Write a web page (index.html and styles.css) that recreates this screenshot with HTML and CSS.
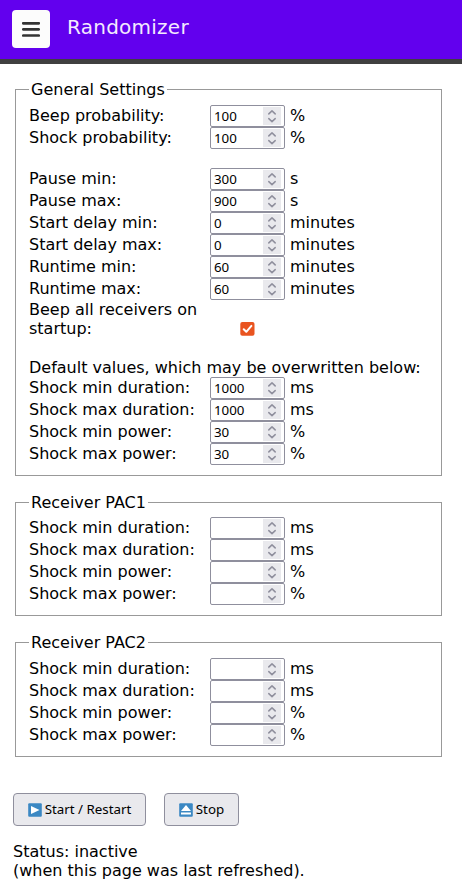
FILE: index.html
```html
<!DOCTYPE html>
<html lang="en">
<head>
<meta charset="utf-8">
<title>Randomizer</title>
<link rel="stylesheet" href="styles.css">
</head>
<body>
<header class="topbar">
  <button class="menu" aria-label="Menu"><svg width="18" height="15" viewBox="0 0 18 15"><path d="M1.3 1.3H16.7M1.3 7.4H16.7M1.3 13.5H16.7" stroke="#333" stroke-width="2.7" stroke-linecap="round"/></svg></button>
  <h1>Randomizer</h1>
</header>
<main>
  <form id="form">
    <fieldset class="general">
      <legend>General Settings</legend>
      <div class="row" data-value="100" data-unit="%">Beep probability:</div>
      <div class="row" data-value="100" data-unit="%">Shock probability:</div>
      <div class="blank"></div>
      <div class="row" data-value="300" data-unit="s">Pause min:</div>
      <div class="row" data-value="900" data-unit="s">Pause max:</div>
      <div class="row" data-value="0" data-unit="minutes">Start delay min:</div>
      <div class="row" data-value="0" data-unit="minutes">Start delay max:</div>
      <div class="row" data-value="60" data-unit="minutes">Runtime min:</div>
      <div class="row" data-value="60" data-unit="minutes">Runtime max:</div>
      <div class="check-row">
        <span>Beep all receivers on startup:</span>
        <svg class="check" width="15" height="15" viewBox="0 0 15 15"><rect x=".3" y=".9" width="14.2" height="13.9" rx="2" fill="#e95420"/><path d="M3.7 8.2L6.3 10.8L11.4 4.9" fill="none" stroke="#fff" stroke-width="2" stroke-linecap="round" stroke-linejoin="round"/></svg>
      </div>
      <div class="blank"></div>
      <div class="note">Default values, which may be overwritten below:</div>
      <div class="row" data-value="1000" data-unit="ms">Shock min duration:</div>
      <div class="row" data-value="1000" data-unit="ms">Shock max duration:</div>
      <div class="row" data-value="30" data-unit="%">Shock min power:</div>
      <div class="row" data-value="30" data-unit="%">Shock max power:</div>
    </fieldset>
    <fieldset class="pac1">
      <legend>Receiver PAC1</legend>
      <div class="row" data-value="" data-unit="ms">Shock min duration:</div>
      <div class="row" data-value="" data-unit="ms">Shock max duration:</div>
      <div class="row" data-value="" data-unit="%">Shock min power:</div>
      <div class="row" data-value="" data-unit="%">Shock max power:</div>
    </fieldset>
    <fieldset class="pac2">
      <legend>Receiver PAC2</legend>
      <div class="row" data-value="" data-unit="ms">Shock min duration:</div>
      <div class="row" data-value="" data-unit="ms">Shock max duration:</div>
      <div class="row" data-value="" data-unit="%">Shock min power:</div>
      <div class="row" data-value="" data-unit="%">Shock max power:</div>
    </fieldset>
    <div class="actions">
      <button type="button" class="btn start"><svg width="14" height="14" viewBox="0 0 14 14"><rect x=".2" y=".2" width="13.6" height="13.6" rx="1" fill="#3b88c3"/><path d="M3 3L11.5 7L3 11Z" fill="#fff"/></svg><span>Start / Restart</span></button>
      <button type="button" class="btn stop"><svg width="14" height="14" viewBox="0 0 14 14"><rect x=".2" y=".2" width="13.6" height="13.6" rx="1" fill="#3b88c3"/><path d="M7 2L12 8H2ZM2 9.4H12V11.4H2Z" fill="#fff"/></svg><span>Stop</span></button>
    </div>
  </form>
  <p class="status">Status: inactive<br>(when this page was last refreshed).</p>
</main>
<script src="fields.js"></script>
</body>
</html>
```
FILE: styles.css
```css
* { box-sizing: border-box; }
body {
  margin: 0;
  background: #fff;
  color: #000;
  font: 16px/19px "DejaVu Sans", sans-serif;
}
.topbar {
  display: flex;
  align-items: flex-start;
  height: 64px;
  padding: 10px 12px;
  background: #6200ee;
  border-bottom: 5px solid #404040;
}
.menu {
  display: flex;
  align-items: center;
  justify-content: center;
  width: 38px;
  height: 38px;
  padding: 0;
  border: 0;
  border-radius: 4px;
  background: #fcfcfc;
}
h1 {
  margin: 5px 0 0 17px;
  color: #f3eafe;
  font-size: 20px;
  font-weight: 400;
  line-height: 24px;
  letter-spacing: .25px;
}
main { padding: 16px 20px 0 13px; }
fieldset {
  min-width: 0;
  margin: 0 0 0 2px;
  padding: 6px 13px 10px;
  border: 1px solid #999;
}
.pac1, .pac2 { margin-top: 17px; padding-top: 5px; }
.pac2 { padding-top: 6px; }
legend { height: 19px; padding: 0 2px; }
.row {
  display: grid;
  grid-template-columns: 181px 75px 1fr;
  height: 22px;
  line-height: 21px;
}
.unit { padding-left: 5px; }
.number {
  display: flex;
  align-items: center;
  height: 22px;
  padding: 0 3px;
  border: 1px solid #8f8f9d;
  border-radius: 2px;
  background: #fff;
}
.number input {
  width: 49px;
  height: 20px;
  padding: 0 0 1px;
  border: 0;
  outline: 0;
  background: transparent;
  color: #000;
  font: 13.33px "Noto Sans", sans-serif;
}
.spin { display: block; flex: none; background: #e9e9ed; }
.blank { height: 19px; }
.check-row {
  display: grid;
  grid-template-columns: 181px 75px;
  height: 38px;
}
.check { align-self: end; justify-self: center; margin-bottom: 2px; }
.note { height: 20px; line-height: 21px; white-space: nowrap; }
.actions { display: flex; gap: 18px; margin-top: 36px; }
.btn {
  display: flex;
  align-items: center;
  justify-content: center;
  gap: 3px;
  height: 33px;
  padding: 0;
  border: 1px solid #8f8f9d;
  border-radius: 4px;
  background: #e9e9ed;
  color: #000;
  font: 13.33px "Noto Sans", sans-serif;
  white-space: nowrap;
}
.btn span { margin-top: -1px; }
.start { width: 133px; }
.stop { width: 75px; }
.status { margin: 16px 0 0; }
```
FILE: fields.js
```js
document.querySelectorAll('.row').forEach(function (row) {
  var label = row.textContent;
  row.innerHTML = '<label></label><span class="number"><input type="text" inputmode="numeric">' +
    '<svg class="spin" width="18" height="18" viewBox="0 0 18 18"><path d="M5.8 6.9L9 3.9L12.2 6.9M5.8 11.6L9 14.6L12.2 11.6" fill="none" stroke="#8f8f9d" stroke-width="1.5" stroke-linecap="round" stroke-linejoin="round"/></svg>' +
    '</span><span class="unit"></span>';
  row.querySelector('label').textContent = label;
  row.querySelector('input').value = row.dataset.value;
  row.querySelector('.unit').textContent = row.dataset.unit;
});
```
